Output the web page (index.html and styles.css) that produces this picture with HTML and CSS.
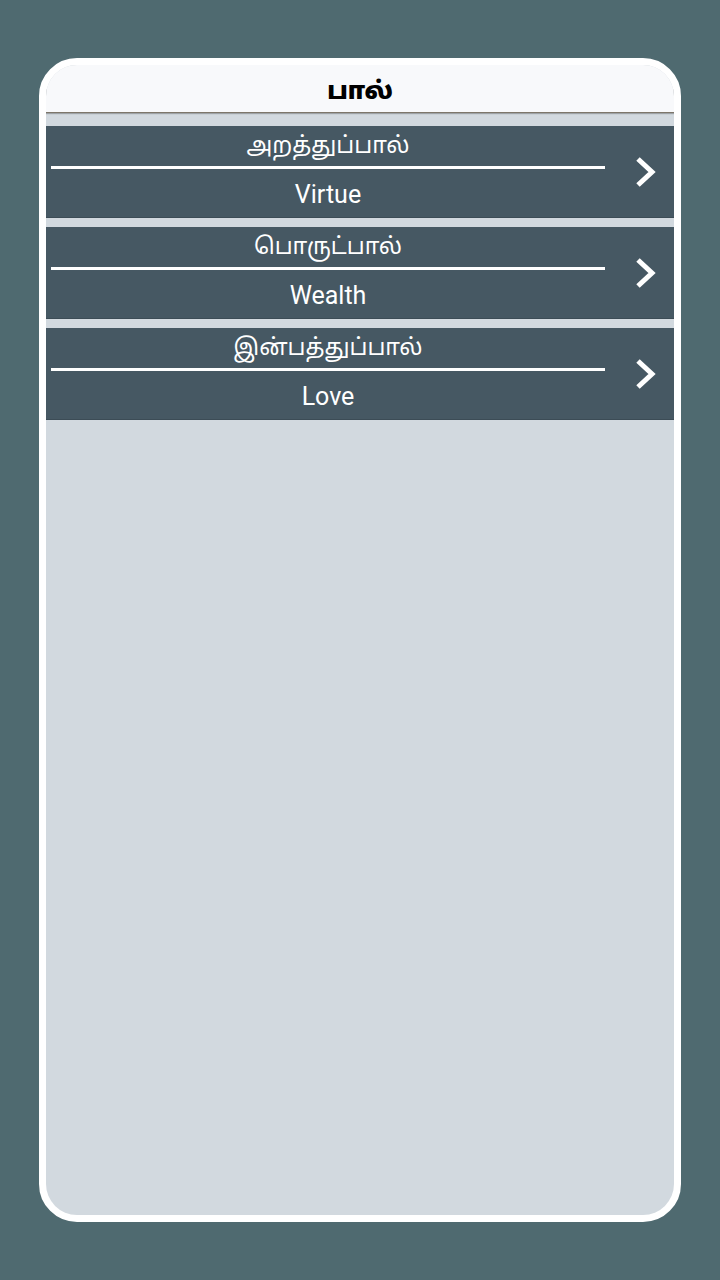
FILE: index.html
```html
<!DOCTYPE html>
<html lang="ta">
<head>
<meta charset="utf-8">
<title>பால்</title>
<link rel="stylesheet" href="styles.css">
</head>
<body>
<div class="frame">
  <div class="screen">
    <header class="topbar">பால்</header>
    <main class="list">
      <a class="row" href="#">
        <div class="labels">
          <div class="ta">அறத்துப்பால்</div>
          <div class="rule"></div>
          <div class="en">Virtue</div>
        </div>
        <div class="arrow">
          <svg width="24" height="34" viewBox="0 0 24 34"><polyline points="4,4 18,17 4,30" fill="none" stroke="#fff" stroke-width="5" stroke-linejoin="miter"/></svg>
        </div>
      </a>
      <a class="row" href="#">
        <div class="labels">
          <div class="ta">பொருட்பால்</div>
          <div class="rule"></div>
          <div class="en">Wealth</div>
        </div>
        <div class="arrow">
          <svg width="24" height="34" viewBox="0 0 24 34"><polyline points="4,4 18,17 4,30" fill="none" stroke="#fff" stroke-width="5" stroke-linejoin="miter"/></svg>
        </div>
      </a>
      <a class="row" href="#">
        <div class="labels">
          <div class="ta">இன்பத்துப்பால்</div>
          <div class="rule"></div>
          <div class="en">Love</div>
        </div>
        <div class="arrow">
          <svg width="24" height="34" viewBox="0 0 24 34"><polyline points="4,4 18,17 4,30" fill="none" stroke="#fff" stroke-width="5" stroke-linejoin="miter"/></svg>
        </div>
      </a>
    </main>
  </div>
</div>
</body>
</html>
```

FILE: styles.css
```css
html, body {
  margin: 0;
  padding: 0;
  background: #4f6a70;
}
body {
  width: 720px;
  height: 1280px;
  font-family: Roboto, "Noto Sans", "Noto Sans Tamil", sans-serif;
}
.frame {
  box-sizing: border-box;
  width: 642px;
  height: 1164px;
  margin: 58px 0 0 39px;
  border: 7px solid #ffffff;
  border-radius: 38px;
  background: #ffffff;
}
.screen {
  height: 100%;
  border-radius: 31px;
  overflow: hidden;
  background: #d2d9df;
  display: flex;
  flex-direction: column;
}
.topbar {
  height: 48px;
  flex: none;
  background: #f8f9fb;
  border-bottom: 1px solid #7d766a;
  box-shadow: 0 1px 1px rgba(60, 60, 60, 0.35);
  display: flex;
  align-items: center;
  justify-content: center;
  padding-top: 3px;
  box-sizing: border-box;
  font-family: "Noto Sans", "Noto Sans Tamil", sans-serif;
  font-weight: 900;
  font-size: 24px;
  color: #000;
}
.list {
  padding-top: 13px;
  display: flex;
  flex-direction: column;
  gap: 9px;
}
.row {
  height: 92px;
  display: flex;
  background: #465863;
  border-bottom: 1px solid #3c4c56;
  box-sizing: border-box;
  text-decoration: none;
  color: #fff;
}
.labels {
  width: 564px;
  display: flex;
  flex-direction: column;
}
.ta {
  height: 37px;
  display: flex;
  align-items: center;
  justify-content: center;
  font-family: "Noto Sans", "Noto Sans Tamil", sans-serif;
  font-size: 23px;
  color: #fff;
}
.rule {
  height: 3px;
  margin: 3px 5px 0 5px;
  background: #ffffff;
}
.en {
  flex: 1;
  display: flex;
  align-items: center;
  justify-content: center;
  padding-top: 3px;
  font-family: Roboto, sans-serif;
  font-size: 25px;
  color: #fff;
}
.arrow {
  flex: 1;
  display: flex;
  align-items: center;
  justify-content: center;
  padding-left: 8px;
}
```
